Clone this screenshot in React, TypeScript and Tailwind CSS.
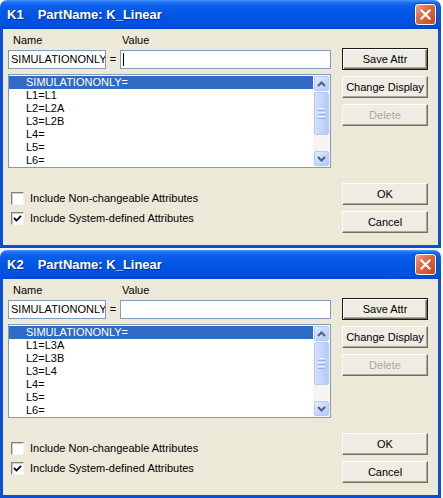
import React from "react";

const FONT = "font-['Liberation_Sans',Arial,sans-serif]";

function CloseButton() {
  return (
    <div className="w-[21px] h-[21px] rounded-[3px] border border-white bg-[linear-gradient(135deg,#F0A080_0%,#E06A44_40%,#C8431C_100%)] flex items-center justify-center shadow-[0_0_0_1px_rgba(0,40,140,0.35)]">
      <svg width="11" height="11" viewBox="0 0 11 11">
        <path d="M1.5 1.5 L9.5 9.5 M9.5 1.5 L1.5 9.5" stroke="white" strokeWidth="2.2" strokeLinecap="square" />
      </svg>
    </div>
  );
}

function TitleBar({ id }: { id: string }) {
  return (
    <div className="h-[29px] rounded-t-[7px] flex items-center justify-between pl-[7px] pr-[5px] bg-[linear-gradient(to_bottom,#4A97FF_0%,#1F6FF2_8%,#0A5EEA_20%,#0055E3_55%,#0052DE_85%,#0046CF_100%)]">
      <div className="flex items-center text-white font-bold text-[13px] leading-none [text-shadow:1px_1px_0_#0A2A8A]">
        <span>{id}</span>
        <span className="ml-[14px]">PartName: K_Linear</span>
      </div>
      <CloseButton />
    </div>
  );
}

function Button({ label, isDefault, disabled }: { label: string; isDefault?: boolean; disabled?: boolean }) {
  const base = "h-[22px] w-[86px] flex items-center justify-center text-[11px] bg-[#EEECE3]";
  const border = isDefault
    ? "border border-[#1A1A1A] shadow-[inset_1px_1px_0_#FFFFFF,inset_-1px_-1px_0_#716F64,inset_-2px_-2px_0_#ACA899]"
    : "border border-t-white border-l-white border-r-[#716F64] border-b-[#716F64] shadow-[inset_-1px_-1px_0_#ACA899]";
  return (
    <div className={`${base} ${border} ${disabled ? "text-[#ACA899]" : "text-black"}`}>{label}</div>
  );
}

function Checkbox({ checked, label }: { checked?: boolean; label: string }) {
  return (
    <div className="flex items-center h-[13px] pl-[3px]">
      <div className="w-[13px] h-[13px] bg-white border border-t-[#808080] border-l-[#808080] border-r-[#F4F3EE] border-b-[#F4F3EE] shadow-[inset_1px_1px_0_#D4D0C8] flex items-center justify-center">
        {checked && (
          <svg width="9" height="9" viewBox="0 0 9 9">
            <path d="M1 4 L3.5 6.5 L8 1.8" stroke="black" strokeWidth="1.8" fill="none" />
          </svg>
        )}
      </div>
      <span className="ml-[6px] text-[11px] leading-none text-black">{label}</span>
    </div>
  );
}

function ScrollButton({ up }: { up?: boolean }) {
  return (
    <div className="w-[15px] h-[15px] rounded-[2px] border border-[#B7CAF5] bg-[linear-gradient(135deg,#E6EEFF_0%,#C7D8FD_50%,#B6CAF8_100%)] flex items-center justify-center">
      <svg width="9" height="6" viewBox="0 0 9 6">
        <path d={up ? "M1 5 L4.5 1.5 L8 5" : "M1 1 L4.5 4.5 L8 1"} stroke="#4D6185" strokeWidth="2" fill="none" />
      </svg>
    </div>
  );
}

function Scrollbar() {
  return (
    <div className="w-[17px] h-full bg-[#F6F5F0] flex flex-col items-center pt-[1px] pb-[1px]">
      <ScrollButton up />
      <div className="mt-[1px] w-[15px] h-[43px] rounded-[2px] border border-[#B7CAF5] bg-[linear-gradient(to_right,#D3E0FE_0%,#C3D4FD_50%,#B6CAF8_100%)] flex flex-col items-center justify-center gap-[1px]">
        <div className="w-[7px] h-[1px] bg-[#EEF4FE]" />
        <div className="w-[7px] h-[1px] bg-[#8CB0F8]" />
        <div className="w-[7px] h-[1px] bg-[#EEF4FE]" />
        <div className="w-[7px] h-[1px] bg-[#8CB0F8]" />
        <div className="w-[7px] h-[1px] bg-[#EEF4FE]" />
        <div className="w-[7px] h-[1px] bg-[#8CB0F8]" />
      </div>
      <div className="flex-1" />
      <ScrollButton />
    </div>
  );
}

function Dialog({ id, items, caret }: { id: string; items: string[]; caret?: boolean }) {
  return (
    <div className={`w-[441px] h-[248px] flex flex-col ${FONT}`}>
      <TitleBar id={id} />
      <div className="flex-1 flex border-x-[3px] border-b-[3px] border-[#0A4FD8] bg-[#ECE9D8] pl-[5px] pr-[10px]">
        {/* left column */}
        <div className="w-[323px] flex flex-col pt-[4px]">
          <div className="h-[14px] flex items-center text-[11px] leading-none text-black">
            <span className="w-[114px] pl-[5px]">Name</span>
            <span>Value</span>
          </div>
          <div className="mt-[3px] h-[19px] flex items-center">
            <div className="w-[98px] h-full bg-white border border-[#7F9DB9] flex items-center pl-[2px] overflow-hidden text-[11px] leading-none whitespace-nowrap">
              SIMULATIONONLY
            </div>
            <div className="w-[14px] text-center text-[11px] leading-none">=</div>
            <div className="flex-1 h-full bg-white border border-[#7F9DB9] flex items-center pl-[2px]">
              {caret && <div className="w-[1px] h-[13px] bg-black" />}
            </div>
          </div>
          <div className="mt-[5px] h-[94px] bg-white border border-[#7F9DB9] flex">
            <div className="flex-1 flex flex-col pt-[1px]">
              {items.map((t, i) => (
                <div
                  key={i}
                  className={`h-[13px] flex items-center pl-[17px] text-[11px] leading-none whitespace-nowrap ${
                    i === 0 ? "bg-[#316AC5] text-white" : "text-black"
                  }`}
                >
                  {t}
                </div>
              ))}
            </div>
            <Scrollbar />
          </div>
          <div className="mt-[24px] flex flex-col gap-[7px]">
            <Checkbox label="Include Non-changeable Attributes" />
            <Checkbox checked label="Include System-defined Attributes" />
          </div>
        </div>
        {/* right column */}
        <div className="ml-[11px] flex flex-col pt-[19px]">
          <div className="flex flex-col gap-[6px]">
            <Button label="Save Attr" isDefault />
            <Button label="Change Display" />
            <Button label="Delete" disabled />
          </div>
          <div className="mt-[57px] flex flex-col gap-[6px]">
            <Button label="OK" />
            <Button label="Cancel" />
          </div>
        </div>
      </div>
    </div>
  );
}

export default function App() {
  return (
    <div className="w-[443px] h-[498px] bg-white overflow-hidden flex flex-col">
      <Dialog id="K1" caret items={["SIMULATIONONLY=", "L1=L1", "L2=L2A", "L3=L2B", "L4=", "L5=", "L6="]} />
      <div className="h-[2px] bg-[#F2F2F2]" />
      <Dialog id="K2" items={["SIMULATIONONLY=", "L1=L3A", "L2=L3B", "L3=L4", "L4=", "L5=", "L6="]} />
    </div>
  );
}
